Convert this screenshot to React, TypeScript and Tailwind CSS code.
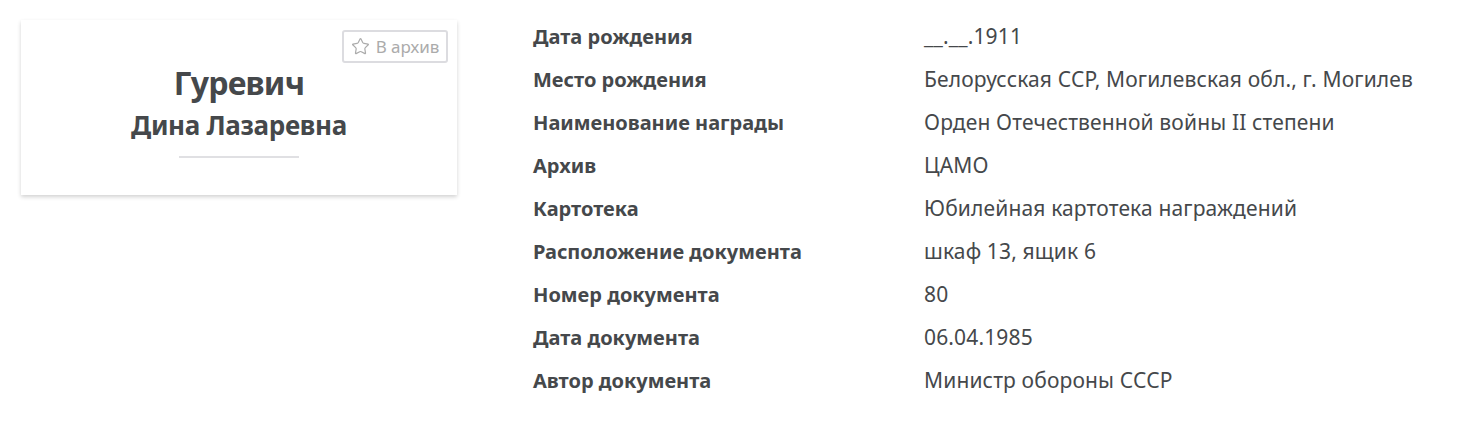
import { Star } from "lucide-react";

const rows: [string, string][] = [
  ["Дата рождения", "__.__.1911"],
  ["Место рождения", "Белорусская ССР, Могилевская обл., г. Могилев"],
  ["Наименование награды", "Орден Отечественной войны II степени"],
  ["Архив", "ЦАМО"],
  ["Картотека", "Юбилейная картотека награждений"],
  ["Расположение документа", "шкаф 13, ящик 6"],
  ["Номер документа", "80"],
  ["Дата документа", "06.04.1985"],
  ["Автор документа", "Министр обороны СССР"],
];

export default function App() {
  return (
    <div className="flex min-h-[425px] w-[1461px] items-start bg-white font-['Noto_Sans',sans-serif] text-[#45484b]">
      <div className="ml-[21px] mt-[20px] flex h-[175px] w-[436px] flex-col items-center bg-white px-[9px] pt-[10px] shadow-[0_2px_4px_rgba(0,0,0,0.18)]">
        <div className="flex w-full justify-end">
          <button className="flex h-[33px] w-[106px] items-center justify-center gap-[6px] rounded-[3px] border-2 border-[#dcdce0] text-[17px] text-[#ababab]">
            <Star size={19} strokeWidth={1.5} />
            В архив
          </button>
        </div>
        <h1 className="text-[32px] font-bold leading-[40px] tracking-[-0.8px]">Гуревич</h1>
        <h2 className="mt-[7px] text-[26px] font-bold leading-[30px] tracking-[-0.3px]">Дина Лазаревна</h2>
        <div className="mt-[16px] h-[2px] w-[120px] bg-[#e0e0e3]" />
      </div>
      <div className="ml-[76px] mt-[15px] flex flex-col">
        {rows.map(([label, value]) => (
          <div key={label} className="flex leading-[43px]">
            <span className="w-[391px] text-[20px] font-bold">{label}</span>
            <span className="text-[21px] tracking-[0.15px]">{value}</span>
          </div>
        ))}
      </div>
    </div>
  );
}
